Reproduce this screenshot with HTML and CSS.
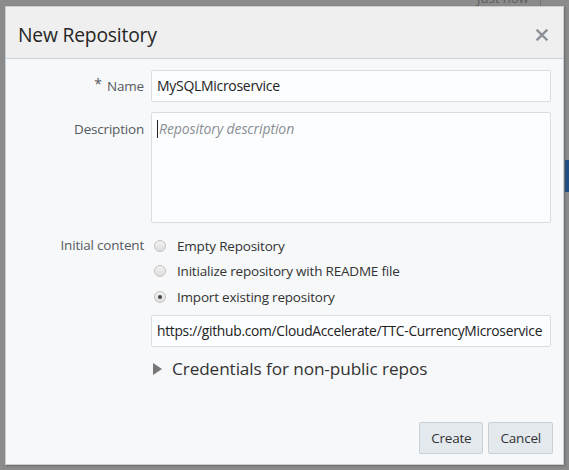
FILE: index.html
```html
<!DOCTYPE html>
<html>
<head>
<meta charset="utf-8">
<link rel="stylesheet" href="styles.css">
</head>
<body>
<div class="backdrop">
  <div class="bg-time">Just now</div>
  <div class="bg-line"></div>
  <div class="bg-blue"></div>
  <div class="dialog">
    <div class="dlg-header">
      <h1 class="dlg-title">New Repository</h1>
      <span class="dlg-close">
        <svg width="12" height="12" viewBox="0 0 12 12"><path d="M1.5 1.5 L10.5 10.5 M10.5 1.5 L1.5 10.5" stroke="#8a9096" stroke-width="2.4" stroke-linecap="square"/></svg>
      </span>
    </div>
    <div class="dlg-body">
      <div class="form-row row-name">
        <label class="form-label"><span class="req">*</span> Name</label>
        <div class="field"><div class="input">MySQLMicroservice</div></div>
      </div>
      <div class="form-row row-desc">
        <label class="form-label label-top">Description</label>
        <div class="field"><div class="textarea"><span class="caret"></span><span class="placeholder">Repository description</span></div></div>
      </div>
      <div class="form-row row-init">
        <label class="form-label label-top">Initial content</label>
        <div class="field">
          <div class="radio-row"><span class="radio"></span><span class="radio-text">Empty Repository</span></div>
          <div class="radio-row"><span class="radio"></span><span class="radio-text">Initialize repository with README file</span></div>
          <div class="radio-row"><span class="radio checked"></span><span class="radio-text">Import existing repository</span></div>
          <div class="input url-input">https://github.com/CloudAccelerate/TTC-CurrencyMicroservice</div>
          <div class="creds"><span class="tri"></span><span class="creds-text">Credentials for non-public repos</span></div>
        </div>
      </div>
      <div class="spacer"></div>
      <div class="dlg-footer">
        <button class="btn">Create</button>
        <button class="btn">Cancel</button>
      </div>
    </div>
  </div>
</div>
</body>
</html>
```
FILE: styles.css
```css
html, body {
  margin: 0;
  padding: 0;
  width: 569px;
  height: 470px;
  overflow: hidden;
}
body {
  font-family: "Open Sans", "Noto Sans", sans-serif;
  color: #333;
}
.backdrop {
  position: relative;
  width: 569px;
  height: 470px;
  background: #8b8b8b;
  padding: 6px 0 0 5px;
  box-sizing: border-box;
}
.bg-time {
  position: absolute;
  left: 477px;
  top: -11px;
  font-size: 13px;
  color: #5f5f5f;
}
.bg-line {
  position: absolute;
  left: 540px;
  top: 0;
  width: 1px;
  height: 6px;
  background: #777;
}
.bg-blue {
  position: absolute;
  left: 565px;
  top: 160px;
  width: 4px;
  height: 32px;
  background: #1f4f80;
}
.dialog {
  width: 559px;
  height: 459px;
  background: #f7f8f9;
  border: 1px solid #c9ced3;
  box-sizing: border-box;
  display: flex;
  flex-direction: column;
  box-shadow: 1px 1px 2px rgba(0,0,0,0.25);
}
.dlg-header {
  height: 52px;
  background: #efefef;
  border-bottom: 1px solid #c6d2de;
  box-sizing: border-box;
  display: flex;
  align-items: center;
  justify-content: space-between;
  padding: 0 15px 0 12px;
}
.dlg-title {
  margin: 0;
  font-weight: 400;
  font-size: 19.3px;
  color: #252525;
  letter-spacing: -0.2px;
  padding-top: 4px;
}
.dlg-close {
  display: flex;
  margin-top: 5px;
}
.dlg-body {
  flex: 1;
  display: flex;
  flex-direction: column;
  padding: 11px 10px 10px 0;
}
.form-row {
  display: grid;
  grid-template-columns: 138px 400px;
  column-gap: 7px;
}
.form-label {
  text-align: right;
  font-size: 13.5px;
  color: #555a60;
  letter-spacing: -0.2px;
}
.row-name .form-label {
  line-height: 32px;
}
.req {
  font-size: 14px;
  position: relative;
  top: -2px;
  margin-right: 2px;
}
.label-top {
  padding-top: 8px;
  line-height: 18px;
}
.input {
  height: 32px;
  box-sizing: border-box;
  background: #fcfdfe;
  border: 1px solid #dadee3;
  border-radius: 2px;
  font-size: 14px;
  line-height: 30px;
  padding: 0 5px;
  color: #222;
  letter-spacing: -0.3px;
  white-space: nowrap;
  overflow: hidden;
}
.row-desc {
  margin-top: 10px;
}
.textarea {
  height: 111px;
  box-sizing: border-box;
  background: #fcfdfe;
  border: 1px solid #dadee3;
  border-radius: 2px;
  padding: 7px 5px;
  font-size: 14px;
  line-height: 18px;
  display: flex;
  align-items: flex-start;
}
.caret {
  width: 1px;
  height: 18px;
  background: #222;
  margin-right: 1px;
}
.placeholder {
  font-style: italic;
  color: #8a8f95;
  letter-spacing: -0.1px;
}
.row-init {
  margin-top: 10px;
}
.row-init .label-top {
  padding-top: 3px;
}
.radio-row {
  height: 25.5px;
  display: flex;
  align-items: center;
}
.radio {
  width: 12px;
  height: 12px;
  border-radius: 50%;
  box-sizing: border-box;
  border: 1px solid #c3c3c3;
  background: linear-gradient(#f2f2f2, #dedede);
  margin-left: 3px;
  margin-right: 11px;
  display: flex;
  align-items: center;
  justify-content: center;
}
.radio.checked::after {
  content: "";
  width: 4px;
  height: 4px;
  border-radius: 50%;
  background: #444;
}
.radio-text {
  font-size: 13.5px;
  color: #333;
  letter-spacing: -0.2px;
}
.url-input {
  margin-top: 5px;
  font-size: 13.8px;
  letter-spacing: -0.28px;
}
.creds {
  display: flex;
  align-items: center;
  height: 44px;
}
.tri {
  width: 0;
  height: 0;
  border-left: 9px solid #777;
  border-top: 6px solid transparent;
  border-bottom: 6px solid transparent;
  margin-left: 2px;
  margin-right: 10px;
}
.creds-text {
  font-size: 17.2px;
  color: #333;
  letter-spacing: -0.1px;
}
.spacer {
  flex: 1;
}
.dlg-footer {
  display: flex;
  justify-content: flex-end;
  gap: 5px;
}
.btn {
  height: 32px;
  box-sizing: border-box;
  border: 1px solid #c8d0d8;
  border-radius: 2px;
  background: #e4e9ee;
  font-family: "Open Sans", "Noto Sans", sans-serif;
  font-size: 13.5px;
  color: #333;
  padding: 0 11px;
  letter-spacing: -0.2px;
}
```
